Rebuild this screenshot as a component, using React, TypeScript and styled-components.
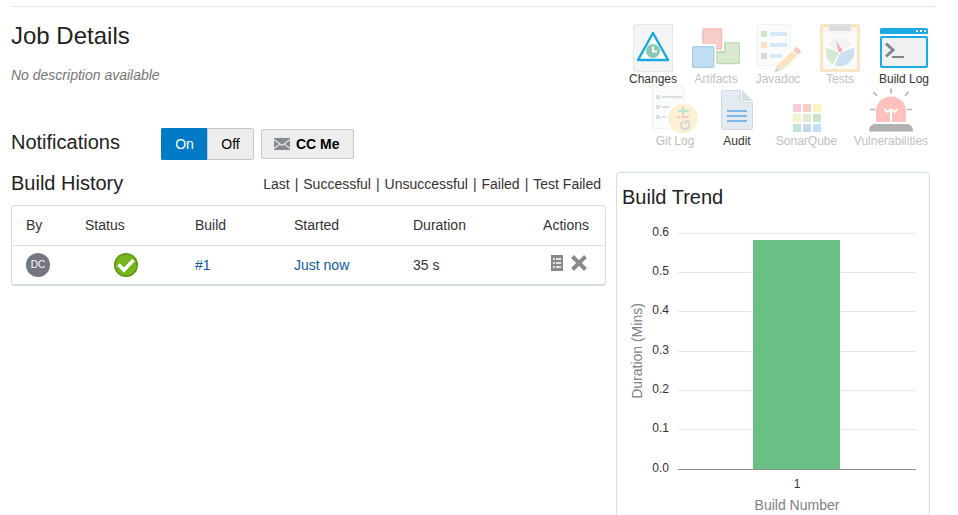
import React from "react";
import styled, { createGlobalStyle, css } from "styled-components";

const GlobalStyle = createGlobalStyle`
  *, *::before, *::after { box-sizing: border-box; }
  body {
    margin: 0;
    background: #fff;
    color: #333;
    font-family: "Liberation Sans", Arial, sans-serif;
    font-size: 14px;
    line-height: 20px;
  }
`;

const Page = styled.main`
  padding: 6px 23px 20px 11px;
`;

const Divider = styled.hr`
  margin: 0;
  border: 0;
  border-top: 1px solid #e5e5e5;
`;

const Columns = styled.div`
  display: grid;
  grid-template-columns: minmax(0, 1fr) 314px;
  column-gap: 10px;
  padding: 17px 5px 0 0;
`;

const PageTitle = styled.h1`
  margin: 0;
  font-size: 24px;
  line-height: 24px;
  font-weight: 400;
  color: #222;
`;

const SectionTitle = styled.h2`
  margin: 0;
  font-size: 20px;
  line-height: 24px;
  font-weight: 400;
  color: #222;
`;

const Description = styled.p`
  margin: 17px 0 43px;
  color: #767676;
  font-style: italic;
`;

const NotificationBar = styled.div`
  display: grid;
  grid-template-columns: 150px auto auto 1fr;
  align-items: center;
  height: 32px;

  ${SectionTitle} {
    padding-bottom: 4px;
  }
`;

const Toggle = styled.div`
  display: flex;
  margin-right: 7px;
`;

const buttonFace = css`
  font: inherit;
  color: #000;
  background: #ededed;
  border: 1px solid #c8c8c8;
  cursor: pointer;
`;

const ToggleButton = styled.button<{ $on?: boolean }>`
  ${buttonFace}
  min-width: 47px;
  height: 32px;
  padding: 0 13px;
  border-radius: 0 2px 2px 0;
  ${(p) =>
    p.$on &&
    css`
      min-width: 46px;
      color: #fff;
      background: #007ac7;
      border-color: #007ac7;
      border-right: 0;
      border-radius: 2px 0 0 2px;
    `}
`;

const CcButton = styled.button`
  ${buttonFace}
  display: flex;
  align-items: center;
  gap: 6px;
  min-width: 93px;
  height: 30px;
  padding: 0 12px;
  border-radius: 2px;
  font-weight: 700;
`;

const HistoryHeader = styled.div`
  display: flex;
  align-items: center;
  justify-content: space-between;
  margin: 11px 0 10px;
  padding-right: 5px;
`;

const Filters = styled.nav`
  display: flex;
  gap: 5px;
  padding-top: 2px;
  white-space: nowrap;
`;

const FilterLink = styled.a`
  color: #333;
  text-decoration: none;
`;

const TablePanel = styled.div`
  border: 1px solid #d5dde5;
  border-bottom-width: 2px;
  border-radius: 4px;
`;

const BuildTable = styled.table`
  width: 100%;
  table-layout: fixed;
  border-collapse: collapse;
`;

const Col = styled.col<{ $width?: number }>`
  width: ${(p) => (p.$width ? `${p.$width}px` : "auto")};
`;

const HeadCell = styled.th<{ $align?: string }>`
  height: 39px;
  padding: 0 16px 0 14px;
  border-bottom: 1px solid #dfe3e7;
  font-weight: 400;
  text-align: ${(p) => p.$align ?? "left"};
`;

const Cell = styled.td<{ $align?: string }>`
  height: 39px;
  padding: 0 14px;
  text-align: ${(p) => p.$align ?? "left"};
`;

const TableLink = styled.a`
  color: #0b5a9c;
  text-decoration: none;
`;

const Avatar = styled.span`
  display: flex;
  align-items: center;
  justify-content: center;
  width: 24px;
  height: 24px;
  border-radius: 50%;
  background: #747682;
  color: #fff;
  font-size: 10px;
`;

const RowActions = styled.div`
  display: flex;
  justify-content: flex-end;
  gap: 8px;
  padding: 0 4px 4px 0;
`;

const IconButton = styled.button`
  display: block;
  padding: 0;
  border: 0;
  background: none;
  cursor: pointer;
`;

const Svg = styled.svg`
  display: block;
`;

const StatusSvg = styled(Svg)`
  margin: 0 auto;
`;

const Shortcuts = styled.nav`
  display: flex;
  flex-wrap: wrap;
  justify-content: flex-end;
  column-gap: 14px;
`;

const Shortcut = styled.a<{ $muted?: boolean; $width: number }>`
  display: flex;
  flex-direction: column;
  align-items: center;
  min-width: ${(p) => p.$width}px;
  font-size: 12px;
  line-height: 14px;
  text-decoration: none;
  white-space: nowrap;
  color: ${(p) => (p.$muted ? "#c1c1c1" : "#333")};
`;

const TrendPanel = styled.section`
  margin-top: 24px;
  padding: 12px 5px 10px;
  border: 1px solid #d5dde5;
  border-radius: 4px;
`;

const ChartSvg = styled(Svg)`
  width: 100%;
  margin-top: 12px;
  font-family: "Liberation Sans", Arial, sans-serif;
`;

const ChangesIcon = () => (
  <Svg width="48" height="48" viewBox="0 0 48 48" aria-hidden="true">
    <rect x="4.5" y="0.5" width="39" height="47" rx="1" fill="#f4f4f4" stroke="#e4e6e8" />
    <path d="M24 9L9 36H39Z" fill="#fff" stroke="#18a9e0" strokeWidth="2.4" strokeLinejoin="round" />
    <circle cx="24" cy="27" r="7" fill="#8ac9b8" />
    <path d="M24 22.5V27.5H28" fill="none" stroke="#fff" strokeWidth="1.8" />
  </Svg>
);

const ArtifactsIcon = () => (
  <Svg width="48" height="48" viewBox="0 0 48 48" aria-hidden="true">
    <rect x="25" y="19" width="22.5" height="20.5" rx="1" fill="#d9e9cf" stroke="#bfdab0" strokeWidth="1.4" />
    <path d="M32.300 18.300V27.500H24.300" fill="none" stroke="#bfdab0" strokeWidth="2.800" />
    <rect x="8" y="2" width="24" height="25" fill="#fff" />
    <rect x="11" y="5" width="18.5" height="20" rx="1" fill="#f9cdc9" stroke="#f3b9b4" strokeWidth="1.4" />
    <rect x="0" y="20" width="24" height="25" fill="#fff" />
    <rect x="0.7" y="22.7" width="21" height="20.6" rx="1" fill="#c2dff2" stroke="#a9cfe6" strokeWidth="1.4" />
  </Svg>
);

const JavadocIcon = () => (
  <Svg width="48" height="48" viewBox="0 0 48 48" aria-hidden="true">
    <rect x="3.5" y="0.5" width="33" height="41" rx="1" fill="#fafbfb" stroke="#efefef" />
    <rect x="7" y="7" width="6" height="6" fill="#cfe6c9" />
    <rect x="7" y="18" width="6" height="6" fill="#fbdfbf" />
    <rect x="7" y="29" width="6" height="6" fill="#dcd3e8" />
    <path d="M16 10H33M16 21H33M16 32H28" stroke="#d5e8f6" strokeWidth="4" />
    <path d="M20 49L22.5 39L41 21L48 27L29 46Z" fill="#fff" />
    <path d="M23 41L38 27L43 32L28 46Z" fill="#fae3bd" />
    <path d="M23 41L28 46L21 48Z" fill="#e4dfd9" />
    <path d="M22 45L24 47L21 48Z" fill="#c4c4c4" />
    <path d="M39 26L41.500 23.500Q42.500 22.500 43.500 23.500L46.500 26.500Q47.300 27.500 46.500 28.500L44 31Z" fill="#f7cbc7" />
  </Svg>
);

const TestsIcon = () => (
  <Svg width="48" height="48" viewBox="0 0 48 48" aria-hidden="true">
    <rect x="5.500" y="1.500" width="37" height="45" rx="1" fill="#fbf7f0" stroke="#fce5c3" strokeWidth="3" />
    <rect x="7" y="10" width="34" height="35" fill="#fafafa" />
    <rect x="13" y="3" width="22" height="4" fill="#d9dde0" />
    <rect x="13" y="0" width="22" height="3" fill="#e0e0dc" />
    <path d="M24 28L11.900 21A14 14 0 0 1 36.100 21Z" fill="#f2f2f2" />
    <path d="M24 28L37.300 23.500A14 14 0 0 1 18 40.700Z" fill="#cce0f2" />
    <path d="M24 28L18 40.700A14 14 0 0 1 10.700 23.500Z" fill="#d5e9d2" />
    <path d="M10 22.500L24 28L38 22.500M24 28L17.500 41.500" fill="none" stroke="#fff" strokeWidth="1.500" />
    <path d="M20.300 17L25.700 25.500L22.300 26.800Z" fill="#f5a9b3" />
    <circle cx="24" cy="26" r="2" fill="#f5a9b3" />
  </Svg>
);

const BuildLogIcon = () => (
  <Svg width="48" height="48" viewBox="0 0 48 48" aria-hidden="true">
    <path d="M0 10V5.500Q0 4 1.500 4H46.500Q48 4 48 5.500V10Z" fill="#1aa9e1" />
    <path d="M36 6H38V8H36ZM40 6H42V8H40ZM44 6H46V8H44Z" fill="#fff" />
    <rect x="1" y="13" width="46" height="30" rx="1" fill="#f0f0f0" stroke="#1aa9e1" strokeWidth="2" />
    <path d="M6 19.500L13 26L6 32.500" fill="none" stroke="#7b8791" strokeWidth="3" />
    <path d="M12 33H24" stroke="#7b8791" strokeWidth="2" />
  </Svg>
);

const GitLogIcon = () => (
  <Svg width="48" height="48" viewBox="0 0 48 48" aria-hidden="true">
    <rect x="1.500" y="0.500" width="32" height="42" rx="1" fill="#fafbfb" stroke="#f1f1f1" />
    <path d="M5 9H9V13H5ZM5 19H9V23H5ZM5 29H9V33H5Z" fill="#dadfe3" />
    <path d="M11 11H31M11 21H22M11 31H15" stroke="#dadfe3" strokeWidth="2" />
    <circle cx="32" cy="32.500" r="17.500" fill="#fff" />
    <circle cx="32" cy="32.500" r="15" fill="#fdf1d3" />
    <path d="M27 25H38M32 21V29" stroke="#b9e4d2" strokeWidth="2" />
    <path d="M26.500 31H29M30 31H38" stroke="#fac5c5" strokeWidth="2" />
    <text x="33" y="39" transform="rotate(-90 33 39)" textAnchor="middle" dominantBaseline="central" fontSize="15" fontWeight="700" fontFamily="Liberation Sans" fill="#d3d8dc">G</text>
  </Svg>
);

const AuditIcon = () => (
  <Svg width="48" height="48" viewBox="0 0 48 48" aria-hidden="true">
    <path d="M9.500 4.500H27.500V16.500H39.500V42.500Q39.500 43.500 38.500 43.500H9.500Q8.500 43.500 8.500 42.500V5.500Q8.500 4.500 9.500 4.500Z" fill="#e5ebf2" stroke="#cfd9e4" />
    <path d="M29 4L40 15H29Z" fill="#d5dce4" />
    <path d="M14 25H34M14 30H34M14 35H34" stroke="#7bb8e8" strokeWidth="2" />
  </Svg>
);

const sonarColors = [
  ["#f8cdd6", "#f8cfc4", "#fff3c4"],
  ["#f4f3c8", "#dfecce", "#c5e6cd"],
  ["#c0e4d6", "#c9d7ec", "#c1e1f6"],
];

const SonarIcon = () => (
  <Svg width="48" height="48" viewBox="0 0 48 48" aria-hidden="true" shapeRendering="crispEdges">
    {sonarColors.map((row, r) =>
      row.map((color, c) => (
        <rect key={color} x={10 + c * 10} y={18 + r * 10} width="8" height="8" fill={color} />
      )),
    )}
  </Svg>
);

const VulnerabilitiesIcon = () => (
  <Svg width="48" height="48" viewBox="0 0 48 48" aria-hidden="true">
    <path d="M9 36V25A15 14.500 0 0 1 39 25V36Z" fill="#ffc1be" />
    <path d="M2 45.500Q2 38 8.500 38H39.500Q46 38 46 45.500Z" fill="#b1b1b1" />
    <path d="M24 2.500V7.500M6.500 6L10 9.800M41.500 6L38 9.800M3 23.500H8M40 23.500H45" stroke="#b1b1b1" strokeWidth="1.600" />
    <path d="M17.500 23L20.500 26L24 23.500L27.500 26L30.500 23M24 24V36" fill="none" stroke="#fff" strokeWidth="2" />
  </Svg>
);

const EnvelopeIcon = () => (
  <Svg width="16" height="12" viewBox="0 0 16 12" aria-hidden="true">
    <rect width="16" height="12" fill="#868b8f" />
    <path d="M0 1.500L8 7.500L16 1.500M0 10.500L6 6M16 10.500L10 6" fill="none" stroke="#e6e6e6" strokeWidth="1.100" />
  </Svg>
);

const SuccessIcon = () => (
  <StatusSvg width="24" height="24" viewBox="0 0 24 24" role="img" aria-label="Successful">
    <circle cx="12" cy="12" r="11.300" fill="#76b51b" stroke="#5b9411" strokeWidth="1.400" />
    <path d="M4.500 11.500L10 17L19.500 7" fill="none" stroke="#fff" strokeWidth="3.400" />
  </StatusSvg>
);

const LogIcon = () => (
  <Svg width="12" height="16" viewBox="0 0 12 16" aria-hidden="true">
    <rect width="12" height="16" fill="#868b8f" />
    <path d="M2 4H4M5 4H10M2 8H4M5 8H10M2 12H4M5 12H10" stroke="#fff" strokeWidth="1.300" />
  </Svg>
);

const DeleteIcon = () => (
  <Svg width="16" height="16" viewBox="0 0 16 16" aria-hidden="true">
    <path d="M1.500 1.500L14.500 14.500M14.500 1.500L1.500 14.500" stroke="#868b8f" strokeWidth="4" />
  </Svg>
);

const shortcuts = [
  { label: "Changes", Icon: ChangesIcon, width: 50 },
  { label: "Artifacts", Icon: ArtifactsIcon, width: 48, muted: true },
  { label: "Javadoc", Icon: JavadocIcon, width: 48, muted: true },
  { label: "Tests", Icon: TestsIcon, width: 48, muted: true },
  { label: "Build Log", Icon: BuildLogIcon, width: 52 },
  { label: "Git Log", Icon: GitLogIcon, width: 48, muted: true },
  { label: "Audit", Icon: AuditIcon, width: 48 },
  { label: "SonarQube", Icon: SonarIcon, width: 63, muted: true },
  { label: "Vulnerabilities", Icon: VulnerabilitiesIcon, width: 78, muted: true },
];

const filters = ["Last", "Successful", "Unsuccessful", "Failed", "Test Failed"];

const ticks = [
  { label: "0.6", y: 12 },
  { label: "0.5", y: 51 },
  { label: "0.4", y: 90 },
  { label: "0.3", y: 130 },
  { label: "0.2", y: 169 },
  { label: "0.1", y: 208 },
  { label: "0.0", y: 248 },
];

const TrendChart = () => (
  <ChartSvg height="300" role="img" aria-label="Build duration in minutes by build number">
    {ticks.map((t) => (
      <React.Fragment key={t.label}>
        <rect x="56" y={t.y} width="238" height="1" fill="#e4e7ec" />
        <text x="47" y={t.y + 3} textAnchor="end" fontSize="12" fill="#333">
          {t.label}
        </text>
      </React.Fragment>
    ))}
    <rect x="131" y="19" width="87" height="229" fill="#69c084" />
    <rect x="56" y="248" width="238" height="1" fill="#8c8f92" />
    <text x="175" y="267" textAnchor="middle" fontSize="12" fill="#333">
      1
    </text>
    <text x="175" y="289" textAnchor="middle" fontSize="14" fill="#808080">
      Build Number
    </text>
    <text x="20" y="130" transform="rotate(-90 20 130)" textAnchor="middle" fontSize="14" fill="#808080">
      Duration (Mins)
    </text>
  </ChartSvg>
);

export default function App() {
  return (
    <>
      <GlobalStyle />
      <Page>
        <Divider />
        <Columns>
          <div>
            <PageTitle>Job Details</PageTitle>
            <Description>No description available</Description>
            <NotificationBar>
              <SectionTitle>Notifications</SectionTitle>
              <Toggle role="group" aria-label="Notifications">
                <ToggleButton type="button" $on aria-pressed="true">
                  On
                </ToggleButton>
                <ToggleButton type="button" aria-pressed="false">
                  Off
                </ToggleButton>
              </Toggle>
              <CcButton type="button">
                <EnvelopeIcon />
                CC Me
              </CcButton>
            </NotificationBar>
            <HistoryHeader>
              <SectionTitle>Build History</SectionTitle>
              <Filters aria-label="Build filters">
                {filters.map((name, i) => (
                  <React.Fragment key={name}>
                    {i > 0 && <span>|</span>}
                    <FilterLink href="#">{name}</FilterLink>
                  </React.Fragment>
                ))}
              </Filters>
            </HistoryHeader>
            <TablePanel>
              <BuildTable>
                <colgroup>
                  <Col $width={59} />
                  <Col $width={110} />
                  <Col $width={99} />
                  <Col $width={119} />
                  <Col $width={100} />
                  <Col />
                </colgroup>
                <thead>
                  <tr>
                    <HeadCell>By</HeadCell>
                    <HeadCell>Status</HeadCell>
                    <HeadCell>Build</HeadCell>
                    <HeadCell>Started</HeadCell>
                    <HeadCell>Duration</HeadCell>
                    <HeadCell $align="right">Actions</HeadCell>
                  </tr>
                </thead>
                <tbody>
                  <tr>
                    <Cell>
                      <Avatar>DC</Avatar>
                    </Cell>
                    <Cell $align="center">
                      <SuccessIcon />
                    </Cell>
                    <Cell>
                      <TableLink href="#">#1</TableLink>
                    </Cell>
                    <Cell>
                      <TableLink href="#">Just now</TableLink>
                    </Cell>
                    <Cell>35 s</Cell>
                    <Cell>
                      <RowActions>
                        <IconButton type="button" aria-label="View log">
                          <LogIcon />
                        </IconButton>
                        <IconButton type="button" aria-label="Delete build">
                          <DeleteIcon />
                        </IconButton>
                      </RowActions>
                    </Cell>
                  </tr>
                </tbody>
              </BuildTable>
            </TablePanel>
          </div>
          <div>
            <Shortcuts aria-label="Build reports">
              {shortcuts.map(({ label, Icon, width, muted }) => (
                <Shortcut key={label} href="#" $width={width} $muted={muted}>
                  <Icon />
                  {label}
                </Shortcut>
              ))}
            </Shortcuts>
            <TrendPanel>
              <SectionTitle>Build Trend</SectionTitle>
              <TrendChart />
            </TrendPanel>
          </div>
        </Columns>
      </Page>
    </>
  );
}
